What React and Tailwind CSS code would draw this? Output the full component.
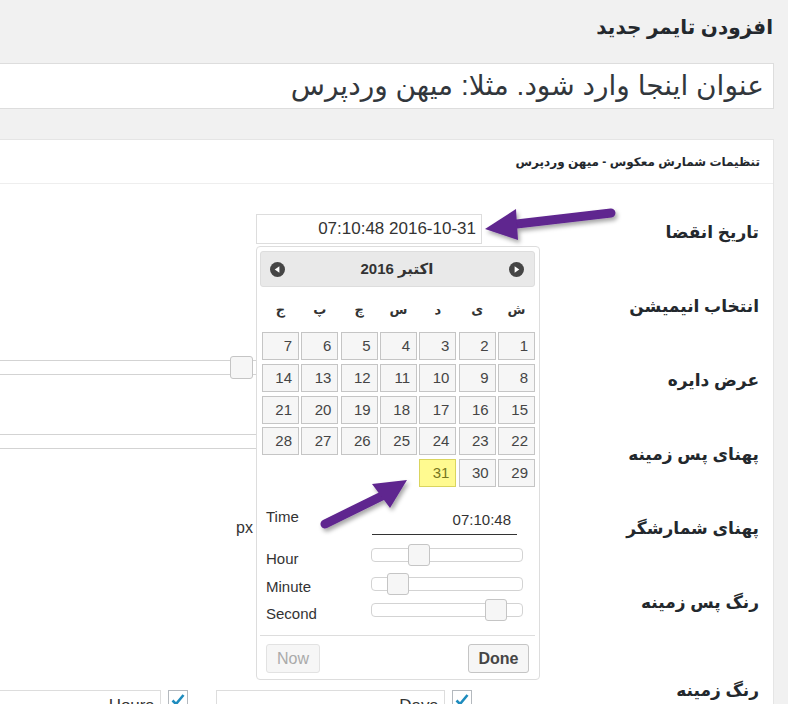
import React from "react"

const FONT = { fontFamily: '"Liberation Sans", "DejaVu Sans", Arial, sans-serif' }

const weeks = [
  [1, 2, 3, 4, 5, 6, 7],
  [8, 9, 10, 11, 12, 13, 14],
  [15, 16, 17, 18, 19, 20, 21],
  [22, 23, 24, 25, 26, 27, 28],
  [29, 30, 31],
]
const dayNames = ["ش", "ی", "د", "س", "چ", "پ", "ج"]

function NavIcon({ dir }) {
  return (
    <svg width="15" height="15" viewBox="0 0 16 16">
      <circle cx="8" cy="8" r="8" fill="#454545" />
      {dir === "left" ? (
        <path d="M5 8 L10 4.5 L10 11.5 Z" fill="#fff" />
      ) : (
        <path d="M11 8 L6 4.5 L6 11.5 Z" fill="#fff" />
      )}
    </svg>
  )
}

function Slider({ handle, className }) {
  return (
    <div className={"relative w-[152px] h-[14px] border border-[#d3d3d3] rounded-[4px] bg-white " + className}>
      <div
        className="absolute top-[-5px] w-[22px] h-[22px] bg-[#f6f6f6] border border-[#c5c5c5] rounded-[3px]"
        style={{ left: handle }}
      />
    </div>
  )
}

function Checkbox() {
  return (
    <div className="w-[20px] h-[20px] border border-[#b4b9be] bg-white shrink-0 flex items-center justify-center">
      <svg width="16" height="16" viewBox="0 0 16 16">
        <path d="M2.5 8.5 L6 12 L13.5 3" stroke="#1e8cbe" strokeWidth="2.6" fill="none" />
      </svg>
    </div>
  )
}

function Row({ label, h = "h-[74px]", children }) {
  return (
    <div dir="rtl" className={"flex " + h}>
      <div className="w-[291px] pr-[14px] pt-[26px] text-[17px] leading-[24px] font-bold text-[#23282d]">
        {label}
      </div>
      <div className="w-[482px] relative">{children}</div>
    </div>
  )
}

function DatePicker() {
  return (
    <div className="absolute left-[256px] top-[246px] w-[284px] h-[434px] bg-white border border-[#dddddd] rounded-[4px] pl-[3px] pr-[4px] pt-[4px] text-[#333]">
      <div className="h-[36px] bg-[#e9e9e9] border border-[#dddddd] rounded-[3px] flex items-center justify-between pl-[9px] pr-[10px]">
        <NavIcon dir="left" />
        <div dir="rtl" className="text-[15px] font-bold text-[#333]">
          اکتبر 2016
        </div>
        <NavIcon dir="right" />
      </div>
      <div dir="rtl" className="grid grid-cols-7 gap-x-[2.3px] h-[45px] items-center ml-[2px] text-[13px] font-bold text-[#333]">
        {dayNames.map((d) => (
          <div key={d} className="text-center">
            {d}
          </div>
        ))}
      </div>
      <div dir="rtl" className="grid grid-cols-7 gap-x-[2.3px] gap-y-[3.75px] ml-[2px]">
        {weeks.flat().map((n) => (
          <div
            key={n}
            dir="ltr"
            className={
              "h-[28px] border text-right pr-[6px] text-[15px] leading-[26px] " +
              (n === 31
                ? "bg-[#fffa90] border-[#dad55e] text-[#777620]"
                : "bg-[#f6f6f6] border-[#c5c5c5] text-[#454545]")
            }
          >
            {n}
          </div>
        ))}
      </div>
      <div className="mt-[16px] flex h-[32px]">
        <div className="pl-[6px] text-[15px] leading-[28px]">Time</div>
        <div className="ml-auto mr-[18px] w-[145px] h-[32px] border-b border-[#333] text-right pr-[6px] text-[15px] leading-[34px]">
          07:10:48
        </div>
      </div>
      <div className="mt-[6px] flex h-[29px]">
        <div className="pl-[6px] pt-[8px] text-[15px] leading-[20px]">Hour</div>
        <Slider handle={36} className="ml-auto mr-[12px] mt-[7px]" />
      </div>
      <div className="flex h-[27px]">
        <div className="pl-[6px] pt-[7px] text-[15px] leading-[20px]">Minute</div>
        <Slider handle={15} className="ml-auto mr-[12px] mt-[7px]" />
      </div>
      <div className="flex h-[30px]">
        <div className="pl-[6px] pt-[7px] text-[15px] leading-[20px]">Second</div>
        <Slider handle={113} className="ml-auto mr-[12px] mt-[6px]" />
      </div>
      <div className="mt-[8px] border-t border-[#dddddd] pt-[8px] flex justify-between pl-[6px] pr-[6px]">
        <button className="w-[54px] h-[29px] bg-[#f6f6f6] border border-[#e2e2e2] rounded-[3px] text-[16px] text-[#aaa]">
          Now
        </button>
        <button className="w-[61px] h-[29px] bg-[#f6f6f6] border border-[#c5c5c5] rounded-[3px] text-[16px] font-bold text-[#454545]">
          Done
        </button>
      </div>
    </div>
  )
}

function Arrows() {
  const c = "#5f258f"
  return (
    <svg className="absolute left-0 top-0 pointer-events-none" width="788" height="704">
      <defs>
        <filter id="sh" x="-20%" y="-50%" width="140%" height="200%">
          <feDropShadow dx="2" dy="3" stdDeviation="2" floodColor="#000" floodOpacity="0.35" />
        </filter>
      </defs>
      <g filter="url(#sh)">
        <line x1="611" y1="213" x2="508" y2="225" stroke={c} strokeWidth="9" strokeLinecap="round" />
        <path d="M485 229 L516 209 L518 240 Z" fill={c} />
      </g>
      <g filter="url(#sh)">
        <line x1="325" y1="524" x2="386" y2="494" stroke={c} strokeWidth="9" strokeLinecap="round" />
        <path d="M407 480 L372 484 L390 508 Z" fill={c} />
      </g>
    </svg>
  )
}

export default function App() {
  return (
    <div className="relative w-[788px] h-[704px] overflow-hidden bg-[#f1f1f1] text-[#333]" style={FONT}>
      <h1 dir="rtl" className="pt-[12px] pr-[15px] text-[20px] leading-[30px] font-bold text-[#23282d]">
        افزودن تایمر جدید
      </h1>
      <div
        dir="rtl"
        className="mt-[21px] mr-[14px] h-[46px] bg-white border border-l-0 border-[#dddddd] flex items-center pr-[9px] text-[28px] text-[#32373c]"
      >
        عنوان اینجا وارد شود. مثلا: میهن وردپرس
      </div>
      <div className="mt-[30px] mr-[14px] bg-white border border-l-0 border-[#e5e5e5] h-[600px]">
        <div
          dir="rtl"
          className="h-[44px] border-b border-[#eeeeee] flex items-center pr-[13px] text-[12px] font-bold text-[#23282d]"
        >
          تنظیمات شمارش معکوس - میهن وردپرس
        </div>
        <div className="pt-[11px]">
          <Row label="تاریخ انقضا">
            <div
              dir="ltr"
              className="mt-[19px] w-[226px] h-[30px] border border-[#dddddd] bg-white text-right text-[17px] leading-[28px] pr-[5px]"
            >
              07:10:48 2016-10-31
            </div>
          </Row>
          <Row label="انتخاب انیمیشن" />
          <Row label="عرض دایره">
            <div className="mt-[17px] relative h-[15px] w-full border border-l-0 border-[#d3d3d3] bg-white">
              <div className="absolute top-[-5px] left-[230px] w-[23px] h-[23px] bg-[#f6f6f6] border border-[#c5c5c5] rounded-[3px]" />
            </div>
          </Row>
          <Row label="پهنای پس زمینه">
            <div className="mt-[17px] h-[15px] w-full border border-l-0 border-[#d3d3d3] bg-white" />
          </Row>
          <Row label="پهنای شمارشگر">
            <div className="flex items-center mt-[25px] h-[24px]">
              <div className="w-[226px] h-[24px] border border-[#dddddd]" />
              <span className="mr-[3px] text-[16px] text-[#333]">px</span>
            </div>
          </Row>
          <Row label="رنگ پس زمینه" h="h-[88px]" />
          <Row label="رنگ زمینه">
            <div className="flex items-start mt-[37px] pr-[10px]">
              <Checkbox />
              <div className="mr-[7px] w-[229px] h-[36px] border border-[#dddddd] pr-[6px] text-[17px] leading-[30px]">
                Days
              </div>
              <div className="mr-[8px]" />
              <div className="mr-[20px]">
                <Checkbox />
              </div>
              <div className="mr-[7px] w-[161px] h-[36px] border border-l-0 border-[#dddddd] pr-[6px] text-[17px] leading-[30px]">
                Hours
              </div>
            </div>
          </Row>
        </div>
      </div>
      <DatePicker />
      <Arrows />
    </div>
  )
}
